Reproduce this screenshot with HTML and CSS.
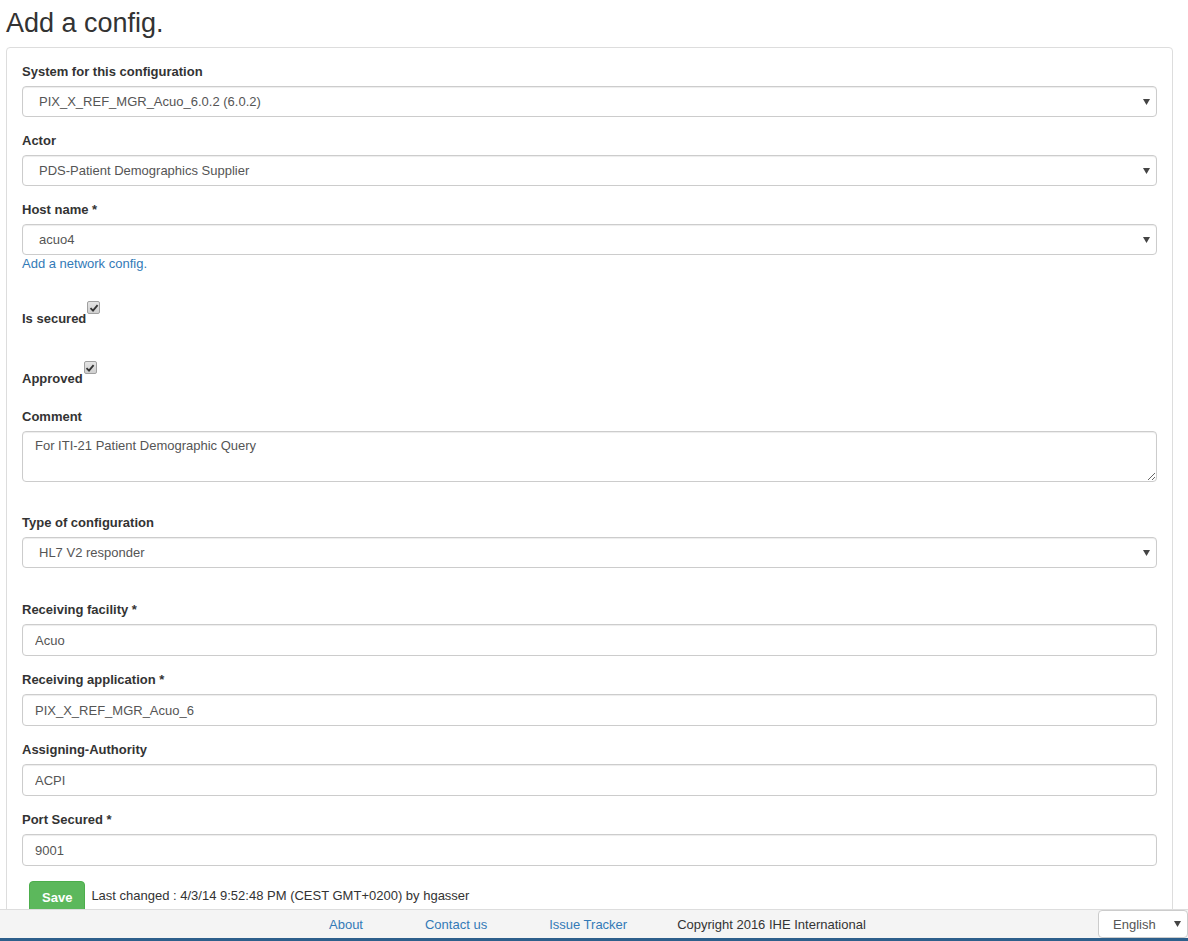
FILE: index.html
```html
<!DOCTYPE html>
<html lang="en">
<head>
    <meta charset="UTF-8">
    <title>Add a config.</title>
    <link rel="stylesheet" href="styles.css">
</head>
<body>

<h1 class="page-title">Add a config.</h1>

<div class="panel">
    <div class="form-group">
        <label class="control-label">System for this configuration</label>
        <div class="select-box">
            <span>PIX_X_REF_MGR_Acuo_6.0.2 (6.0.2)</span>
            <svg class="caret" width="7" height="6" viewBox="0 0 7 6"><path d="M0 0H7L3.5 6Z" fill="#444"/></svg>
        </div>
    </div>

    <div class="form-group">
        <label class="control-label">Actor</label>
        <div class="select-box">
            <span>PDS-Patient Demographics Supplier</span>
            <svg class="caret" width="7" height="6" viewBox="0 0 7 6"><path d="M0 0H7L3.5 6Z" fill="#444"/></svg>
        </div>
    </div>

    <div class="form-group host-group">
        <label class="control-label">Host name *</label>
        <div class="select-box">
            <span>acuo4</span>
            <svg class="caret" width="7" height="6" viewBox="0 0 7 6"><path d="M0 0H7L3.5 6Z" fill="#444"/></svg>
        </div>
        <a class="help-link" href="#">Add a network config.</a>
    </div>

    <div class="check-row first-check">
        <span class="check-label">Is secured</span>
        <span class="fake-check">
            <svg width="10" height="10" viewBox="0 0 10 10"><path d="M1.5 5.2L4 7.6L8.6 2.2" fill="none" stroke="#333" stroke-width="1.8"/></svg>
        </span>
    </div>

    <div class="check-row">
        <span class="check-label">Approved</span>
        <span class="fake-check">
            <svg width="10" height="10" viewBox="0 0 10 10"><path d="M1.5 5.2L4 7.6L8.6 2.2" fill="none" stroke="#333" stroke-width="1.8"/></svg>
        </span>
    </div>

    <div class="form-group comment-group">
        <label class="control-label">Comment</label>
        <textarea class="form-control text-area">For ITI-21 Patient Demographic Query</textarea>
    </div>

    <div class="form-group type-group">
        <label class="control-label">Type of configuration</label>
        <div class="select-box">
            <span>HL7 V2 responder</span>
            <svg class="caret" width="7" height="6" viewBox="0 0 7 6"><path d="M0 0H7L3.5 6Z" fill="#444"/></svg>
        </div>
    </div>

    <div class="form-group text-group">
        <label class="control-label">Receiving facility *</label>
        <input class="form-control" type="text" value="Acuo">
    </div>

    <div class="form-group text-group">
        <label class="control-label">Receiving application *</label>
        <input class="form-control" type="text" value="PIX_X_REF_MGR_Acuo_6">
    </div>

    <div class="form-group text-group">
        <label class="control-label">Assigning-Authority</label>
        <input class="form-control" type="text" value="ACPI">
    </div>

    <div class="form-group text-group">
        <label class="control-label">Port Secured *</label>
        <input class="form-control" type="text" value="9001">
    </div>

    <div class="actions">
        <button class="btn-save">Save</button>
        <span class="last-changed">Last changed : 4/3/14 9:52:48 PM (CEST GMT+0200) by hgasser</span>
    </div>
</div>

<div class="footer">
    <div class="footer-links">
        <a href="#">About</a>
        <a href="#">Contact us</a>
        <a href="#" class="last-link">Issue Tracker</a>
        <span class="copyright">Copyright 2016 IHE International</span>
    </div>
    <div class="lang-select">
        <span>English</span>
        <svg width="7" height="6" viewBox="0 0 7 6"><path d="M0 0H7L3.5 6Z" fill="#444"/></svg>
    </div>
</div>

</body>
</html>
```

FILE: styles.css
```css
/* General styling */
body {
    font-family: "Liberation Sans", Arial, sans-serif;
    font-size: 13px;
    color: #333;
    background: #fff;
    margin: 0;
    padding-bottom: 40px;
}

.page-title {
    font-size: 27px;
    font-weight: normal;
    line-height: 30px;
    margin: 0;
    padding: 8px 6px 0 6px;
    color: #333;
}

.panel {
    margin: 9px 15px 0 6px;
    border: 1px solid #ddd;
    border-radius: 4px;
    padding: 14px 15px 20px 15px;
}

/* Form groups */
.form-group {
    margin-bottom: 14px;
}

.control-label {
    display: block;
    font-weight: bold;
    line-height: 18px;
    padding-top: 1px;
    margin-bottom: 5px;
}

.select-box {
    display: flex;
    align-items: center;
    justify-content: space-between;
    height: 31px;
    box-sizing: border-box;
    border: 1px solid #ccc;
    border-radius: 4px;
    padding: 0 6px 0 16px;
    color: #555;
    box-shadow: inset 0 1px 1px rgba(0, 0, 0, 0.075);
}

.caret {
    margin-top: 1px;
}

.form-control {
    display: block;
    width: 100%;
    height: 32px;
    box-sizing: border-box;
    border: 1px solid #ccc;
    border-radius: 4px;
    padding: 6px 12px;
    font-family: inherit;
    font-size: 13px;
    color: #555;
    box-shadow: inset 0 1px 1px rgba(0, 0, 0, 0.075);
    margin: 0;
}

.text-area {
    height: 51px;
    line-height: 18px;
    padding: 5px 12px;
}

.host-group {
    margin-bottom: 29px;
}

.help-link {
    display: block;
    line-height: 16px;
    padding-top: 1px;
    color: #337ab7;
    text-decoration: none;
}

/* Checkbox rows */
.check-row {
    display: flex;
    align-items: flex-start;
}

.first-check {
    margin-bottom: 33px;
}

.check-label {
    font-weight: bold;
    line-height: 18px;
    padding-top: 9px;
}

.fake-check {
    display: flex;
    align-items: center;
    justify-content: center;
    width: 11px;
    height: 11px;
    margin-left: 1px;
    border: 1px solid #a0a0a0;
    border-radius: 2px;
    background: linear-gradient(#e4e4e4, #cfcfcf);
}

.comment-group {
    margin-top: 19px;
    margin-bottom: 31px;
}

.type-group {
    margin-bottom: 32px;
}

.text-group {
    margin-bottom: 14px;
}

/* Buttons */
.actions {
    display: flex;
    align-items: center;
    margin-top: 15px;
}

.btn-save {
    margin-left: 7px;
    height: 32px;
    padding: 0 12px;
    font-family: inherit;
    font-size: 13px;
    font-weight: bold;
    color: #fff;
    background-color: #5cb85c;
    border: 1px solid #4cae4c;
    border-radius: 4px;
}

.last-changed {
    margin-left: 6px;
    margin-top: -3px;
}

/* Footer */
.footer {
    position: fixed;
    left: 0;
    right: 0;
    bottom: 0;
    height: 28px;
    display: flex;
    align-items: center;
    background: #f4f4f4;
    border-top: 1px solid #ddd;
    border-bottom: 3px solid #2d5f8b;
}

.footer-links {
    display: flex;
    padding-left: 329px;
    padding-top: 1px;
}

.footer-links a {
    color: #337ab7;
    text-decoration: none;
    margin-right: 62px;
}

.footer-links .last-link {
    margin-right: 50px;
}

.copyright {
    color: #333;
}

.lang-select {
    margin-left: auto;
    display: flex;
    align-items: center;
    justify-content: space-between;
    width: 90px;
    height: 28px;
    box-sizing: border-box;
    padding: 0 6px 0 14px;
    background: #fff;
    border: 1px solid #ccc;
    border-radius: 4px;
    color: #555;
}
```
